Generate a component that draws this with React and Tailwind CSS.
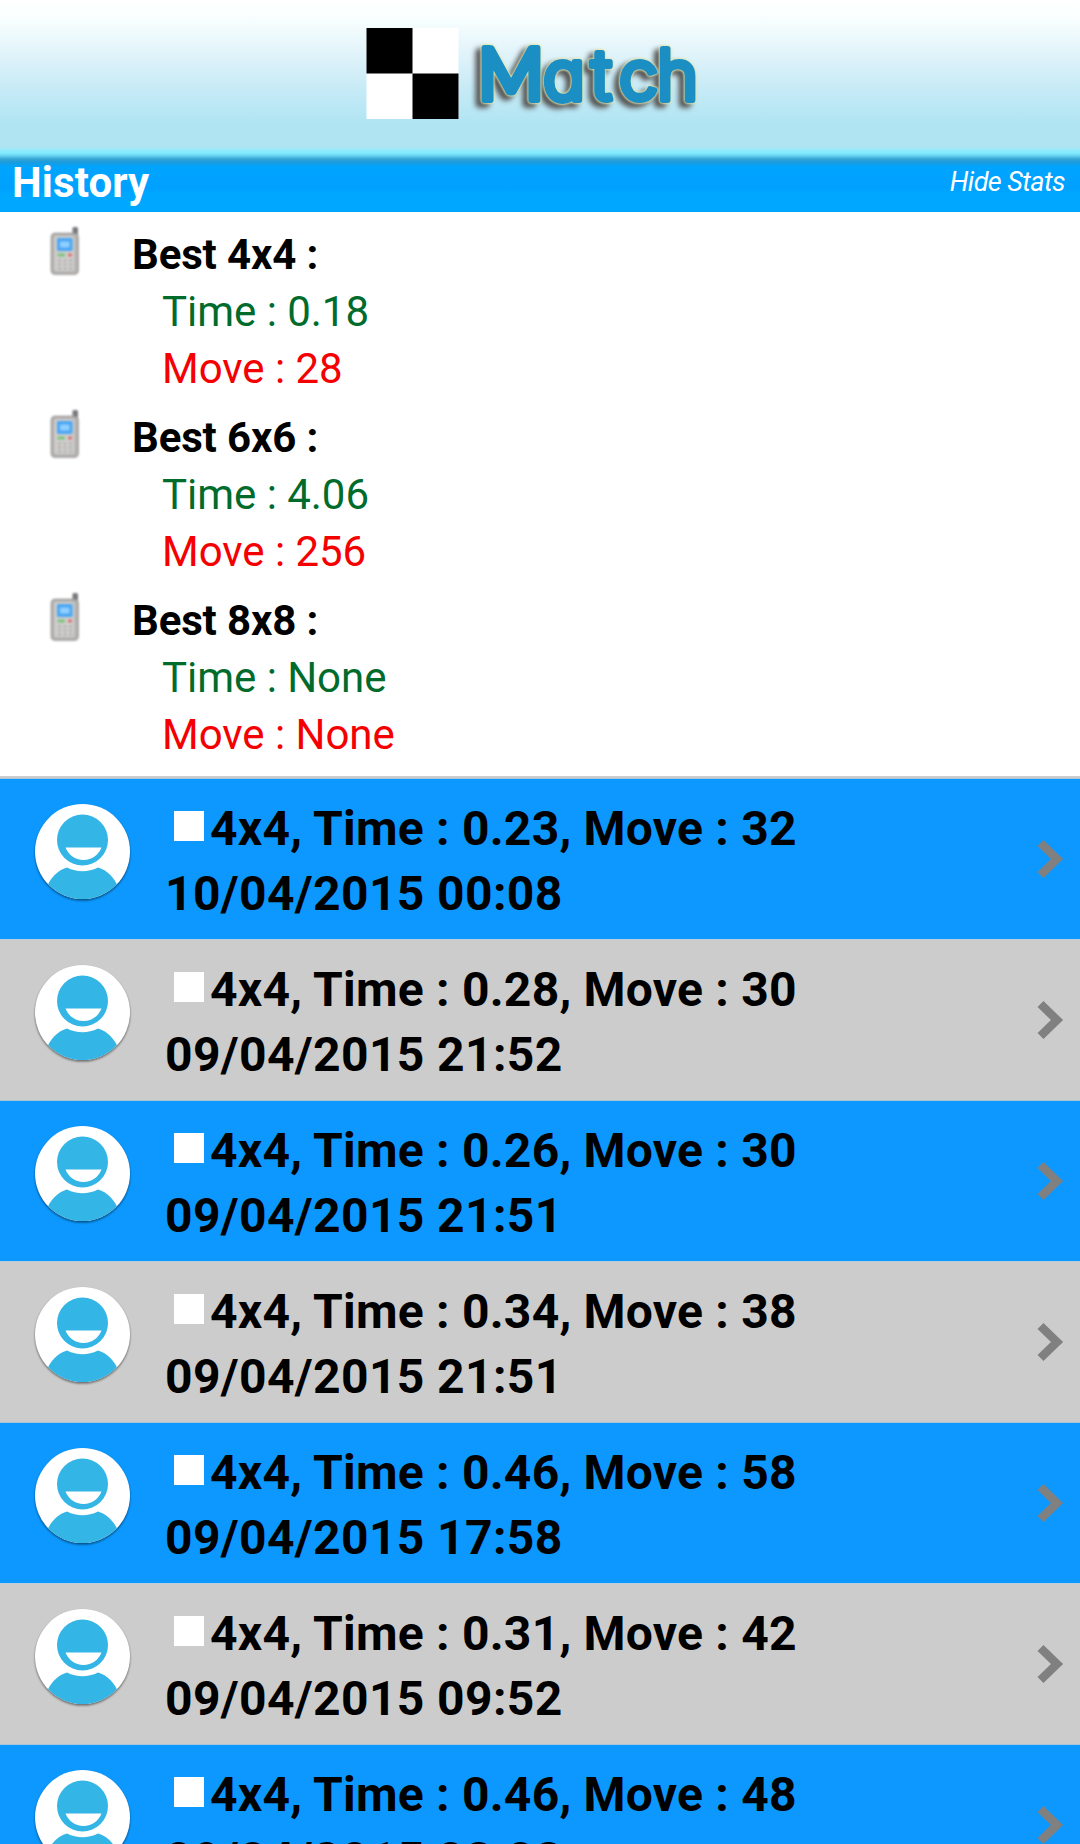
import React, { useState } from "react";

const bests = [
  { size: "4x4", time: "0.18", move: "28" },
  { size: "6x6", time: "4.06", move: "256" },
  { size: "8x8", time: "None", move: "None" },
];

const games = [
  { size: "4x4", time: "0.23", move: 32, date: "10/04/2015 00:08" },
  { size: "4x4", time: "0.28", move: 30, date: "09/04/2015 21:52" },
  { size: "4x4", time: "0.26", move: 30, date: "09/04/2015 21:51" },
  { size: "4x4", time: "0.34", move: 38, date: "09/04/2015 21:51" },
  { size: "4x4", time: "0.46", move: 58, date: "09/04/2015 17:58" },
  { size: "4x4", time: "0.31", move: 42, date: "09/04/2015 09:52" },
  { size: "4x4", time: "0.46", move: 48, date: "09/04/2015 08:08" },
];

function Logo() {
  return (
    <svg width="380" height="150" viewBox="340 0 380 150">
      <rect x="366.5" y="28" width="92" height="91" fill="#fff" />
      <rect x="366.5" y="28" width="46" height="45.5" fill="#000" />
      <rect x="412.5" y="73.5" width="46" height="45.5" fill="#000" />
      <text
        y="100"
        fill="#1b8fc4"
        stroke="#1b8fc4"
        strokeWidth="6"
        strokeLinejoin="round"
        strokeLinecap="round"
        className="font-['Inter',sans-serif] text-[70px] font-light [font-feature-settings:'cv11'] [filter:drop-shadow(0_0_1px_#e3e6ae)_drop-shadow(0_0_1px_#e3e6ae)_drop-shadow(-5px_4px_2.5px_#555)]"
      >
        <tspan x="478" className="font-['Lato',sans-serif] text-[71px] font-normal">M</tspan>
        <tspan x="543">a</tspan>
        <tspan x="591">t</tspan>
        <tspan x="619">c</tspan>
        <tspan x="657">h</tspan>
      </text>
    </svg>
  );
}

function PhoneIcon() {
  return (
    <svg width="30" height="50" viewBox="0 0 30 50" className="ml-[50px] mt-[14px] shrink-0 blur-[0.8px]">
      <rect x="22.5" y="1" width="5.5" height="14" rx="1.5" fill="#77777c" />
      <rect x="1.5" y="7.5" width="26.5" height="40.5" rx="3.5" fill="#b9b7b5" stroke="#9a9896" strokeWidth="1.6" />
      <rect x="4.5" y="10" width="19.5" height="35" rx="2" fill="#d0cecc" />
      <rect x="7" y="12" width="15.5" height="13" rx="1" fill="#4ba6f3" />
      <rect x="10" y="15.5" width="9.5" height="6" rx="1" fill="#8fd0ff" />
      <rect x="7.5" y="27.5" width="7.5" height="3" rx="1" fill="#7cc17a" />
      <rect x="18" y="27.5" width="4" height="3" rx="1" fill="#dc6a6a" />
      <path d="M8 34.5h3m2.5 0h3m2.5 0h3M8 38.5h3m2.5 0h3m2.5 0h3M8 42.5h3m2.5 0h3m2.5 0h3" stroke="#b0aeac" strokeWidth="2" />
    </svg>
  );
}

function Avatar() {
  return (
    <svg width="100" height="102" viewBox="0 0 100 102" className="ml-8 mt-[22px] shrink-0">
      <defs>
        <clipPath id="disc">
          <circle cx="50.5" cy="50.5" r="47.5" />
        </clipPath>
        <filter id="drop" x="-10%" y="-10%" width="120%" height="120%">
          <feGaussianBlur stdDeviation="0.8" />
        </filter>
      </defs>
      <circle cx="50.5" cy="52" r="47.5" fill="#000" opacity="0.5" filter="url(#drop)" />
      <g clipPath="url(#disc)">
        <rect width="100" height="102" fill="#fff" />
        <path d="M14 88C18 77 26 69 35 66.5Q50.5 74 66 66.5C75 69 83 77 87 88V102H14Z" fill="#33b5e5" />
      </g>
      <circle cx="50.5" cy="39" r="25.5" fill="#33b5e5" />
      <path d="M33.5 46.5H69.5C66.5 54 60 59 51.5 59S36.5 54 33.5 46.5Z" fill="#fff" />
    </svg>
  );
}

function Arrow() {
  return (
    <svg width="28" height="40" viewBox="0 0 28 40" className="absolute right-[15px] top-[60px]">
      <path d="M3.5 4L20 20L3.5 36" fill="none" stroke="#808080" strokeWidth="8.5" />
    </svg>
  );
}

function Best({ size, time, move }) {
  return (
    <div className="flex h-[183px]">
      <PhoneIcon />
      <div className="ml-[52px] pt-[14px] text-[42px] leading-[57px]">
        <p className="font-bold tracking-[-0.15px]">Best {size} :</p>
        <p className="ml-[30px] tracking-[-0.03px] text-[#006b2b]">Time : {time}</p>
        <p className="ml-[30px] tracking-[-0.03px] text-[#f50000]">Move : {move}</p>
      </div>
    </div>
  );
}

function Game({ game, odd }) {
  return (
    <div
      className={`relative flex h-[161px] shrink-0 border-t ${
        odd ? "bg-[#ccc] border-[#b9cfdd]" : "bg-[#0c98ff] border-[#a9c4d8]"
      }`}
    >
      <Avatar />
      <div className="ml-[34px] pt-[17px] text-[48px] leading-[65px] font-bold">
        <p className="flex items-center tracking-[0.22px]">
          <span className="ml-2 mr-[6px] mb-1.5 size-[30px] bg-white"></span>
          {game.size}, Time : {game.time}, Move : {game.move}
        </p>
        <p className="-ml-px tracking-[0.38px]">{game.date}</p>
      </div>
      <Arrow />
    </div>
  );
}

function App() {
  const [showStats, setShowStats] = useState(true);
  return (
    <div className="flex h-[1844px] w-[1080px] flex-col overflow-hidden bg-white font-['Roboto',sans-serif] text-black">
      <header className="flex h-[150px] shrink-0 justify-center bg-[linear-gradient(#fff_0,#f8fefe_20px,#e0f3fa_55px,#c4eaf6_92px,#b0e4f3_125px,#b0e4f3_146px,#9be8f9_150px)] pr-5">
        <Logo />
      </header>
      <div className="flex h-[62px] shrink-0 items-start justify-between bg-[linear-gradient(#90ebfc_0,#84eaff_3px,#62cfef_6px,#38a5d4_9px,#1b9bdc_12px,#00a5ff_17px,#00a0ff_38px,#00a7ff_44px)] px-3 text-white">
        <h1 className="pt-[5px] text-[42px] leading-[56px] font-bold tracking-[0.1px]">History</h1>
        <button onClick={() => setShowStats(!showStats)} className="pt-[14px] pr-[3px] text-[27px] leading-9 tracking-[-0.55px] italic">
          {showStats ? "Hide Stats" : "Show Stats"}
        </button>
      </div>
      {showStats && (
        <section className="h-[564px] shrink-0">
          {bests.map((best) => (
            <Best key={best.size} {...best} />
          ))}
        </section>
      )}
      <div className="flex flex-col border-t-2 border-[#ccc]">
        {games.map((game, i) => (
          <Game key={i} game={game} odd={i % 2 === 1} />
        ))}
      </div>
    </div>
  );
}

export default App;
